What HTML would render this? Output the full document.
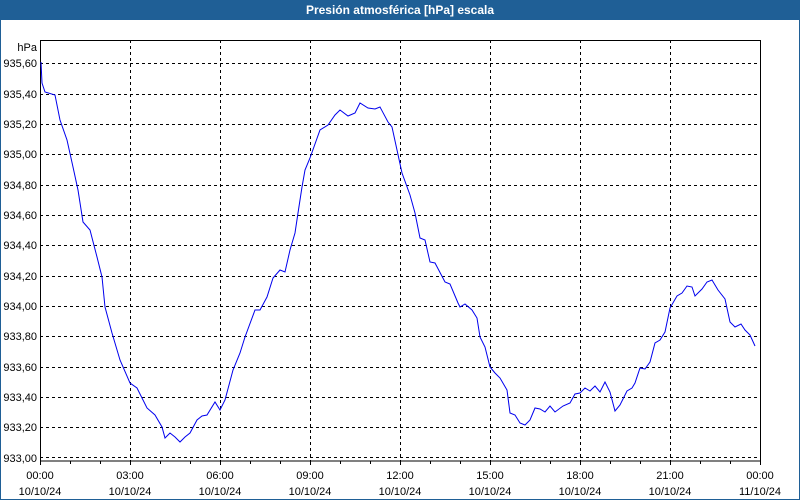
<!DOCTYPE html>
<html><head><meta charset="utf-8"><style>
html,body{margin:0;padding:0;background:#fff;}
body{width:800px;height:500px;overflow:hidden;position:relative;}
.frame{position:absolute;left:0;top:0;width:798px;height:499px;border:1px solid #1f5f96;border-top:none;}
.title{position:absolute;left:0;top:0;width:800px;height:20px;background:#1f5f96;color:#fff;font:bold 12px "Liberation Sans",sans-serif;text-align:center;line-height:21px;}
svg{position:absolute;left:0;top:0;}
text{font-family:"Liberation Sans",sans-serif;font-size:11px;fill:#000;}
</style></head><body>
<div class="frame"></div>
<div class="title">Presión atmosférica [hPa] escala</div>
<svg width="800" height="500" xmlns="http://www.w3.org/2000/svg">
<g stroke="#000" stroke-width="1" stroke-dasharray="3,3" fill="none" shape-rendering="crispEdges">
<line x1="40" y1="63.5" x2="760" y2="63.5"/>
<line x1="40" y1="94.5" x2="760" y2="94.5"/>
<line x1="40" y1="124.5" x2="760" y2="124.5"/>
<line x1="40" y1="154.5" x2="760" y2="154.5"/>
<line x1="40" y1="185.5" x2="760" y2="185.5"/>
<line x1="40" y1="215.5" x2="760" y2="215.5"/>
<line x1="40" y1="245.5" x2="760" y2="245.5"/>
<line x1="40" y1="276.5" x2="760" y2="276.5"/>
<line x1="40" y1="306.5" x2="760" y2="306.5"/>
<line x1="40" y1="336.5" x2="760" y2="336.5"/>
<line x1="40" y1="367.5" x2="760" y2="367.5"/>
<line x1="40" y1="397.5" x2="760" y2="397.5"/>
<line x1="40" y1="427.5" x2="760" y2="427.5"/>
<line x1="40" y1="457.5" x2="760" y2="457.5"/>
<line x1="130.5" y1="40" x2="130.5" y2="461"/>
<line x1="220.5" y1="40" x2="220.5" y2="461"/>
<line x1="310.5" y1="40" x2="310.5" y2="461"/>
<line x1="400.5" y1="40" x2="400.5" y2="461"/>
<line x1="490.5" y1="40" x2="490.5" y2="461"/>
<line x1="580.5" y1="40" x2="580.5" y2="461"/>
<line x1="670.5" y1="40" x2="670.5" y2="461"/>
</g>
<g stroke="#000" stroke-width="1" shape-rendering="crispEdges" fill="none">
<rect x="40.5" y="40.5" width="720" height="420.5"/>
<path d="M40.5 461v4M70.5 461v3M100.5 461v3M130.5 461v4M160.5 461v3M190.5 461v3M220.5 461v4M250.5 461v3M280.5 461v3M310.5 461v4M340.5 461v3M370.5 461v3M400.5 461v4M430.5 461v3M460.5 461v3M490.5 461v4M520.5 461v3M550.5 461v3M580.5 461v4M610.5 461v3M640.5 461v3M670.5 461v4M700.5 461v3M730.5 461v3M760.5 461v4"/>
</g>
<polyline fill="none" stroke="#0000ee" stroke-width="1" points="41,62 42,83 45,92 55,95 60,120 67,140 73,167 78,190 83,222 90,230 97,257 102,277 105,307 112,333 120,360 130,383 137,388 147,408 155,415 162,427 165,438 170,433 175,437 180,442 185,437 190,433 197,420 202,416 207,415 215,402 220,410 225,400 233,370 240,353 245,337 255,310 260,310 267,297 273,278 280,270 285,272 290,250 295,233 298,213 302,187 305,170 310,158 320,130 328,125 335,115 340,110 348,116 355,113 360,103 368,108 375,109 380,107 388,122 392,127 397,150 402,173 410,195 415,213 420,238 425,240 430,262 435,263 445,282 450,284 458,303 460,307 465,304 472,310 477,318 480,337 485,347 490,367 495,373 500,378 507,390 510,413 515,415 520,423 525,425 530,420 535,408 540,409 545,412 550,406 555,412 563,406 570,403 575,394 580,393 585,388 590,391 595,386 600,392 605,382 610,392 615,411 620,405 627,391 632,388 635,383 640,368 645,369 650,362 655,343 660,340 665,332 670,308 677,296 682,293 687,286 692,287 695,296 702,289 707,282 712,280 718,290 725,299 730,322 735,327 741,324 745,330 750,335 755,346"/>
<g text-anchor="end">
<text x="37" y="51">hPa</text>
<text x="37" y="67">935,60</text>
<text x="37" y="98">935,40</text>
<text x="37" y="128">935,20</text>
<text x="37" y="158">935,00</text>
<text x="37" y="189">934,80</text>
<text x="37" y="219">934,60</text>
<text x="37" y="249">934,40</text>
<text x="37" y="280">934,20</text>
<text x="37" y="310">934,00</text>
<text x="37" y="340">933,80</text>
<text x="37" y="371">933,60</text>
<text x="37" y="401">933,40</text>
<text x="37" y="431">933,20</text>
<text x="37" y="462">933,00</text>
</g>
<g text-anchor="middle">
<text x="40" y="479">00:00</text><text x="40" y="495">10/10/24</text>
<text x="130" y="479">03:00</text><text x="130" y="495">10/10/24</text>
<text x="220" y="479">06:00</text><text x="220" y="495">10/10/24</text>
<text x="310" y="479">09:00</text><text x="310" y="495">10/10/24</text>
<text x="400" y="479">12:00</text><text x="400" y="495">10/10/24</text>
<text x="490" y="479">15:00</text><text x="490" y="495">10/10/24</text>
<text x="580" y="479">18:00</text><text x="580" y="495">10/10/24</text>
<text x="670" y="479">21:00</text><text x="670" y="495">10/10/24</text>
<text x="760" y="479">00:00</text><text x="760" y="495">11/10/24</text>
</g>
</svg>
</body></html>
